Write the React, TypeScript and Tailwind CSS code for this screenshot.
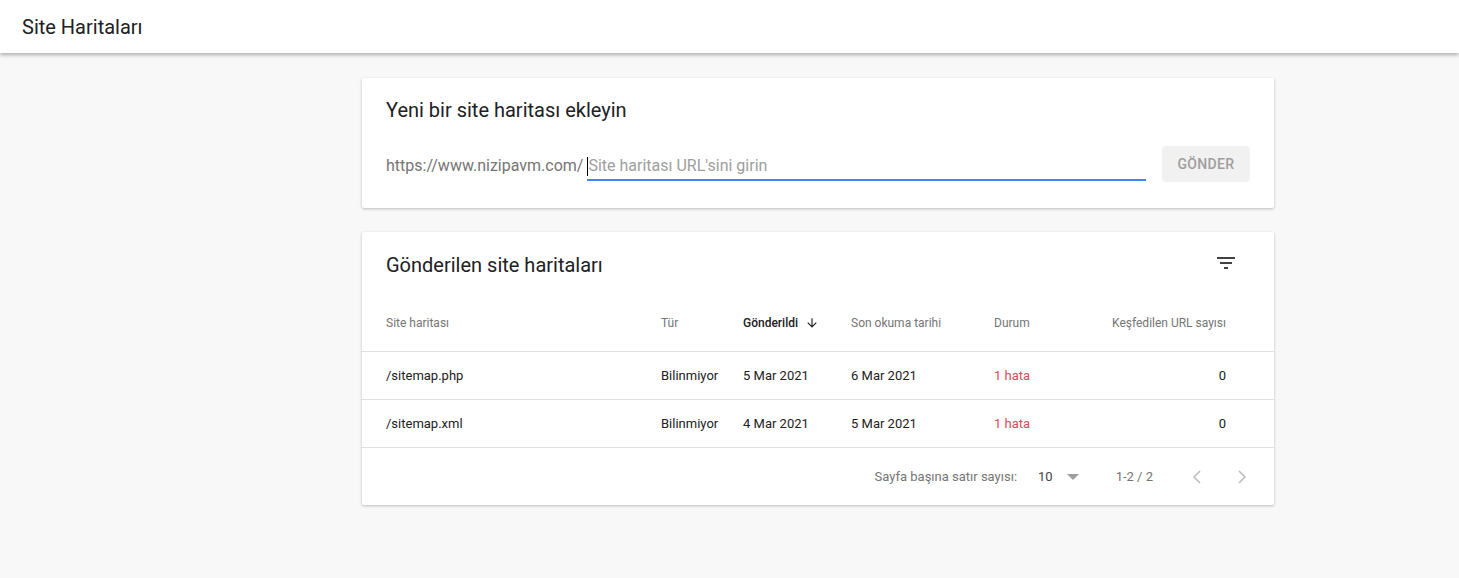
import React from "react";

const rows = [
  { name: "/sitemap.php", type: "Bilinmiyor", sent: "5 Mar 2021", read: "6 Mar 2021", status: "1 hata", count: "0" },
  { name: "/sitemap.xml", type: "Bilinmiyor", sent: "4 Mar 2021", read: "5 Mar 2021", status: "1 hata", count: "0" },
];

const cols = "grid grid-cols-[275px_82px_108px_143px_100px_1fr] pl-6 pr-12 items-center";

export default function App() {
  return (
    <div className="min-h-[578px] bg-[#f8f8f8] font-['Roboto',sans-serif] text-[#212121]">
      <header className="h-[53px] bg-white flex items-center px-[22px] shadow-[0_2px_4px_rgba(0,0,0,0.3)] relative">
        <h1 className="text-[20px] text-[#202124]">Site Haritaları</h1>
      </header>

      <main className="w-[912px] ml-[362px] pt-[25px] flex flex-col gap-6">
        <section className="bg-white rounded-[2px] shadow-[0_1px_3px_rgba(0,0,0,0.25)] h-[130px] px-6 pt-[20px]">
          <h2 className="text-[20px] leading-6 text-[#202124]">Yeni bir site haritası ekleyin</h2>
          <div className="flex items-center mt-[24px]">
            <span className="text-[16px] text-[#757575] mr-[4px] pt-[4px]">https://www.nizipavm.com/</span>
            <div className="flex-1 border-b-2 border-[#4285f4] h-[34px] flex items-center pt-[6px]">
              <span className="w-px h-[19px] bg-black" />
              <span className="text-[16px] text-[#9e9e9e]">Site haritası URL'sini girin</span>
            </div>
            <button className="ml-4 w-[88px] h-[36px] rounded bg-[#f1f1f1] text-[14px] font-medium text-[#9e9e9e] tracking-wide">
              GÖNDER
            </button>
          </div>
        </section>

        <section className="bg-white rounded-[2px] shadow-[0_1px_3px_rgba(0,0,0,0.25)]">
          <div className="flex items-center justify-between pl-6 pr-[38px] h-[66px]">
            <h2 className="text-[20px] text-[#202124]">Gönderilen site haritaları</h2>
            <svg width="20" height="14" viewBox="0 0 20 14" className="mt-[-4px]">
              <rect x="1" y="1" width="18" height="2" fill="#424242" />
              <rect x="4" y="6" width="12" height="2" fill="#424242" />
              <rect x="8" y="11" width="4" height="2" fill="#424242" />
            </svg>
          </div>

          <div className={`${cols} h-[54px] pb-1 text-[12px] text-[#757575] border-b border-[#e0e0e0]`}>
            <span>Site haritası</span>
            <span>Tür</span>
            <span className="flex items-center text-[#212121] font-medium">
              Gönderildi
              <svg width="14" height="14" viewBox="0 0 24 24" className="ml-[7px]">
                <path d="M20 12l-1.41-1.41L13 16.17V4h-2v12.17l-5.58-5.59L4 12l8 8 8-8z" fill="#212121" />
              </svg>
            </span>
            <span>Son okuma tarihi</span>
            <span>Durum</span>
            <span className="text-right">Keşfedilen URL sayısı</span>
          </div>

          {rows.map((r, i) => (
            <div key={i} className={`${cols} h-[48px] text-[13px] border-b border-[#e0e0e0]`}>
              <span>{r.name}</span>
              <span>{r.type}</span>
              <span>{r.sent}</span>
              <span>{r.read}</span>
              <span className="text-[#e0465a]">{r.status}</span>
              <span className="text-right">{r.count}</span>
            </div>
          ))}

          <div className="h-[57px] flex items-center justify-end pr-[27px] text-[13px] text-[#757575]">
            <span>Sayfa başına satır sayısı:</span>
            <span className="ml-[21px] text-[#424242]">10</span>
            <svg width="12" height="6" viewBox="0 0 12 6" className="ml-[14px]">
              <path d="M0 0h12L6 6z" fill="#9e9e9e" />
            </svg>
            <span className="ml-[37px]">1-2 / 2</span>
            <svg width="10" height="14" viewBox="0 0 10 14" className="ml-[39px]">
              <path d="M8 1L2 7l6 6" stroke="#bdbdbd" strokeWidth="1.6" fill="none" />
            </svg>
            <svg width="10" height="14" viewBox="0 0 10 14" className="ml-[35px]">
              <path d="M2 1l6 6-6 6" stroke="#bdbdbd" strokeWidth="1.6" fill="none" />
            </svg>
          </div>
        </section>
      </main>
    </div>
  );
}
